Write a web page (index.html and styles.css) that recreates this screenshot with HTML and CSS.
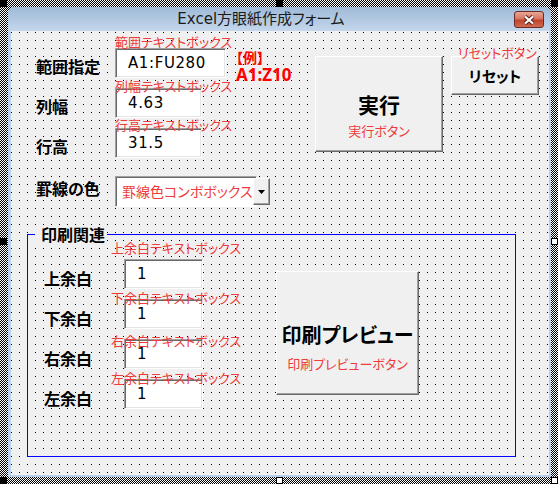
FILE: index.html
```html
<!DOCTYPE html>
<html lang="ja">
<head>
<meta charset="utf-8">
<title>Excel方眼紙作成フォーム</title>
<link rel="stylesheet" href="styles.css">
</head>
<body>
<div class="window">
  <div class="titlebar">
    <div class="title">Excel方眼紙作成フォーム</div>
    <div class="close">
      <svg width="14" height="10" viewBox="0 0 14 10"><path d="M3 1.5L11 8.5M11 1.5L3 8.5" stroke="#5a231b" stroke-width="4.2"/><path d="M3 1.5L11 8.5M11 1.5L3 8.5" stroke="#fff" stroke-width="2.2"/></svg>
    </div>
  </div>
  <div class="client">
    <div class="top">
      <div class="fields">
        <div class="row r1">
          <div class="label">範囲指定</div>
          <div class="group">
            <div class="cap">範囲テキストボックス</div>
            <div class="box w111">A1:FU280</div>
          </div>
        </div>
        <div class="row r2">
          <div class="label">列幅</div>
          <div class="group">
            <div class="cap">列幅テキストボックス</div>
            <div class="box w87">4.63</div>
          </div>
        </div>
        <div class="row r3">
          <div class="label">行高</div>
          <div class="group">
            <div class="cap">行高テキストボックス</div>
            <div class="box w87">31.5</div>
          </div>
        </div>
      </div>
      <div class="example">
        <div class="ex1">【例】</div>
        <div class="ex2">A1:Z10</div>
      </div>
      <div class="btn exec">
        <div class="big">実行</div>
        <div class="cap">実行ボタン</div>
      </div>
      <div class="reset-group">
        <div class="cap">リセットボタン</div>
        <div class="btn reset">リセット</div>
      </div>
    </div>
    <div class="combo-row">
      <div class="label">罫線の色</div>
      <div class="combo">
        <div class="combo-text">罫線色コンボボックス</div>
        <div class="drop"><svg width="7" height="4" viewBox="0 0 7 4"><path d="M0 0h7L3.5 4z" fill="#000"/></svg></div>
      </div>
    </div>
    <div class="frame">
      <div class="frame-cap">印刷関連</div>
      <div class="frame-body">
        <div class="margins">
          <div class="mrow m1">
            <div class="label">上余白</div>
            <div class="group">
              <div class="cap">上余白テキストボックス</div>
              <div class="box w79">1</div>
            </div>
          </div>
          <div class="mrow m2">
            <div class="label">下余白</div>
            <div class="group">
              <div class="cap">下余白テキストボックス</div>
              <div class="box w79">1</div>
            </div>
          </div>
          <div class="mrow m3">
            <div class="label">右余白</div>
            <div class="group">
              <div class="cap">右余白テキストボックス</div>
              <div class="box w79">1</div>
            </div>
          </div>
          <div class="mrow m4">
            <div class="label">左余白</div>
            <div class="group">
              <div class="cap">左余白テキストボックス</div>
              <div class="box w79">1</div>
            </div>
          </div>
        </div>
        <div class="btn preview">
          <div class="big">印刷プレビュー</div>
          <div class="cap">印刷プレビューボタン</div>
        </div>
      </div>
    </div>
  </div>
</div>
<div class="handle h-tl"></div>
<div class="handle h-tm"></div>
<div class="handle h-tr"></div>
<div class="handle h-lm"></div>
<div class="handle open h-rm"></div>
<div class="handle h-bl"></div>
<div class="handle open h-bm"></div>
<div class="handle open h-br"></div>
</body>
</html>
```
FILE: styles.css
```css
* { box-sizing: border-box; }
html { background: #fff; }
body {
  margin: 0;
  width: 558px;
  height: 484px;
  padding: 7px 7px 7px 8px;
  position: relative;
  overflow: hidden;
  background: repeating-conic-gradient(#000 0 25%, #fff 0 50%) 0 0 / 2px 2px;
  font-family: "Noto Sans CJK JP", sans-serif;
  font-feature-settings: "palt";
  color: #000;
}
.window {
  height: 470px;
  display: flex;
  flex-direction: column;
  background: #b9d1ea;
  padding-bottom: 2px;
  border-radius: 6px 6px 0 0;
}
.titlebar {
  flex: none;
  height: 24px;
  display: flex;
  align-items: flex-start;
  background: linear-gradient(#9fb9d7, #c4d7ec);
  border-radius: 6px 6px 0 0;
}
.title {
  flex: 1;
  text-align: center;
  font-family: "DejaVu Sans", "Noto Sans CJK JP", sans-serif;
  font-size: 15px;
  line-height: 24px;
  color: #1a1a1a;
}
.close {
  flex: none;
  width: 30px;
  height: 17px;
  margin: 4px 7px 0 0;
  border: 1px solid #6b2a22;
  border-radius: 3px;
  background: linear-gradient(#e8a895, #d77561 45%, #c1432d 55%, #d06b53);
  display: flex;
  align-items: center;
  justify-content: center;
}
.client {
  flex: 1;
  margin: 0 2px 0 3px;
  background-color: #000;
  background-image:
    linear-gradient(90deg, transparent 1px, #f0f0f0 1px),
    linear-gradient(transparent 1px, #f0f0f0 1px);
  background-size: 8px 8px;
  background-position: 0 1px;
}
.top {
  display: flex;
  align-items: flex-start;
  padding: 7px 0 0 25px;
}
.fields { flex: none; width: 190px; }
.row, .mrow {
  display: flex;
  align-items: flex-end;
  height: 40px;
}
.label {
  flex: none;
  width: 79px;
  font-size: 16px;
  font-weight: 700;
  line-height: 20px;
  margin-bottom: 2px;
  white-space: nowrap;
}
.group {
  display: flex;
  flex-direction: column;
  justify-content: flex-end;
  height: 40px;
}
.cap {
  font-size: 13px;
  line-height: 13px;
  color: #ee3b3b;
  white-space: nowrap;
}
.group .cap, .reset-group .cap {
  position: relative;
  z-index: 1;
}
.box {
  flex: none;
  height: 30px;
  background: #fff;
  border: 1px solid;
  border-color: #a0a0a0 #fff #fff #a0a0a0;
  box-shadow: inset 1px 1px #696969, inset -1px -1px #e3e3e3;
  font-family: "DejaVu Sans", sans-serif;
  font-size: 15px;
  letter-spacing: 0.6px;
  line-height: 28px;
  padding-left: 12px;
  font-feature-settings: normal;
}
.w111 { width: 111px; }
.w87 { width: 87px; }
.w79 { width: 79px; }
.r1 .cap { margin-bottom: 0; }
.r2 .cap { margin-bottom: -4px; }
.r3 .cap { margin-bottom: -3px; }

.example {
  flex: none;
  width: 79px;
  margin: 10px 0 0 10px;
  color: #f00;
  font-weight: 700;
}
.ex1 { font-size: 14px; line-height: 18px; }
.ex2 { font-family: "Noto Sans", sans-serif; font-size: 17px; line-height: 18px; }

.btn {
  background: #f0f0f0;
  border: 1px solid;
  border-color: #fff #696969 #696969 #fff;
  box-shadow: inset -1px -1px #a0a0a0;
  display: flex;
  flex-direction: column;
  align-items: center;
  justify-content: center;
}
.big { font-size: 21px; font-weight: 700; line-height: 26px; }
.btn .cap { line-height: 14px; }
.exec {
  flex: none;
  width: 128px;
  height: 96px;
  margin-top: 18px;
  padding-top: 20px;
}
.exec .cap { margin-top: 7px; }
.reset-group {
  flex: none;
  width: 88px;
  margin: 8px 0 0 8px;
}
.reset-group .cap { margin: 0 0 -3px 7px; }
.reset {
  height: 39px;
  font-size: 15px;
  font-weight: 700;
}

.combo-row {
  display: flex;
  align-items: center;
  margin-top: 18px;
  padding-left: 25px;
}
.combo-row .label { margin-bottom: 7px; }
.combo {
  display: flex;
  width: 142px;
  height: 31px;
  background: #fff;
  border: 1px solid;
  border-color: #a0a0a0 #fff #fff #a0a0a0;
  box-shadow: inset 1px 1px #696969;
  padding: 1px 0 1px 1px;
}
.combo-text {
  flex: 1;
  color: #ee3b3b;
  font-size: 14px;
  line-height: 27px;
  padding-left: 5px;
  white-space: nowrap;
}
.drop {
  flex: none;
  width: 17px;
  background: #f0f0f0;
  border: 1px solid;
  border-color: #fff #696969 #696969 #fff;
  box-shadow: inset -1px -1px #a0a0a0;
  display: flex;
  align-items: center;
  justify-content: center;
}

.frame {
  width: 489px;
  height: 223px;
  margin: 27px 0 0 16px;
  border: 1px solid #0000ff;
}
.frame-cap {
  width: max-content;
  margin: -10px 0 0 7px;
  padding: 0 2px 0 6px;
  background: #f0f0f0;
  font-size: 16px;
  font-weight: 700;
  line-height: 19px;
}
.frame-body {
  display: flex;
  align-items: flex-start;
  padding-left: 16px;
  margin-top: 5px;
}
.margins { flex: none; width: 159px; }
.mrow .label { width: 80px; margin-bottom: 1px; }
.mrow .cap { margin-left: -13px; }
.m1 .cap { margin-bottom: 5px; }
.m2 .cap { margin-bottom: -5px; }
.m3 .cap { margin-bottom: -8px; }
.m4 .cap { margin-bottom: -5px; }
.preview {
  flex: none;
  width: 143px;
  height: 124px;
  margin: 22px 0 0 73px;
  padding-top: 27px;
}
.preview .big { font-size: 20px; }
.preview .cap { margin-top: 9px; }

.handle {
  position: absolute;
  width: 7px;
  height: 7px;
  background: #000;
}
.handle.open { background: #fff; border: 1px solid #000; }
.h-tl { left: 0; top: 0; }
.h-tm { left: 276px; top: 0; }
.h-tr { left: 551px; top: 0; }
.h-lm { left: 0; top: 238px; }
.h-rm { left: 551px; top: 238px; }
.h-bl { left: 0; top: 477px; }
.h-bm { left: 276px; top: 477px; }
.h-br { left: 551px; top: 477px; }
```
